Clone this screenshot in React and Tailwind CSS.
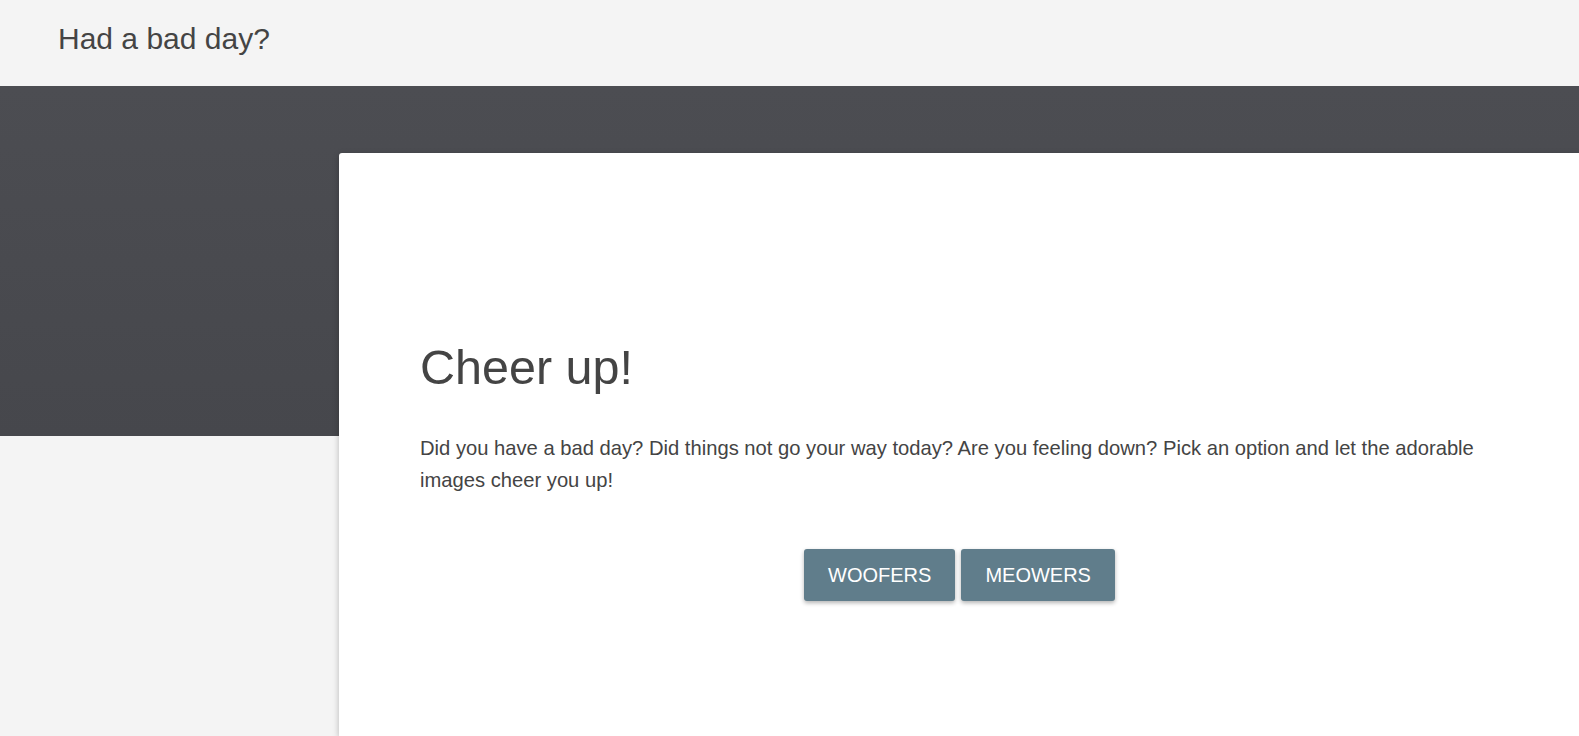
export default function App() {
  return (
    <div
      className="h-[736px] overflow-hidden bg-[#f4f4f4] text-[#444]"
      style={{ fontFamily: '"Liberation Sans", Arial, sans-serif' }}
    >
      {/* top bar */}
      <header className="h-[86px] pl-[58px] pt-[24px]">
        <h2 className="text-[30px] leading-none">Had a bad day?</h2>
      </header>

      {/* dark hero band, card sits over it */}
      <div className="h-[350px] bg-linear-to-b from-[#4c4d52] to-[#46474c]" />

      <div className="-mt-[283px] pl-[339px]">
        <main className="h-[583px] rounded-tl-[3px] bg-white pl-[81px] pr-[80px] pt-[186px] shadow-[0_2px_6px_rgba(0,0,0,0.25)]">
          <h1 className="text-[48.5px] leading-[56px]">Cheer up!</h1>
          <p className="mt-[37px] text-[20.2px] leading-[32px]">
            Did you have a bad day? Did things not go your way today? Are you feeling down? Pick an option and let the
            adorable images cheer you up!
          </p>
          <div className="mt-[53px] flex justify-center gap-[6px]">
            {['Woofers', 'Meowers'].map((label) => (
              <button
                key={label}
                className="h-[52px] rounded-[3px] bg-[#607d8b] px-6 text-[20px] uppercase text-white shadow-[0_2px_4px_rgba(0,0,0,0.3)]"
              >
                {label}
              </button>
            ))}
          </div>
        </main>
      </div>
    </div>
  )
}
